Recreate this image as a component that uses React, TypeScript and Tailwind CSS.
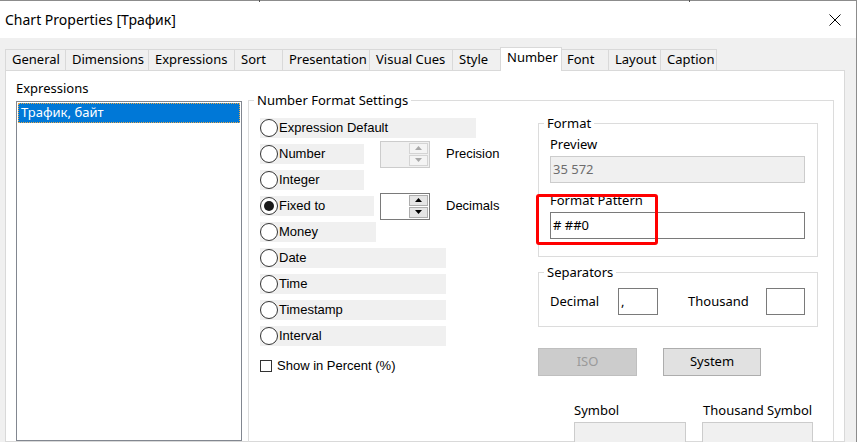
import React from 'react';

const seg = "font-['Noto_Sans',sans-serif]";
const ms = "font-['Liberation_Sans',Arial,sans-serif]";

type Tab = { label: string; w: string; pl?: string; first?: boolean; last?: boolean; active?: boolean; noLeft?: boolean };

const tabs: Tab[] = [
  { label: 'General', w: 'w-[60px]' },
  { label: 'Dimensions', w: 'w-[83px]' },
  { label: 'Expressions', w: 'w-[86px]' },
  { label: 'Sort', w: 'w-[48px]' },
  { label: 'Presentation', w: 'w-[87px]' },
  { label: 'Visual Cues', w: 'w-[83px]' },
  { label: 'Style', w: 'w-[48px]' },
  { label: 'Number', w: 'w-[62px]', active: true },
  { label: 'Font', w: 'w-[46px]', noLeft: true },
  { label: 'Layout', w: 'w-[52px]' },
  { label: 'Caption', w: 'w-[57px]', last: true },
];

type RadioDef = { label: string; w: string; spin?: string; disabled?: boolean; checked?: boolean };

const radios: RadioDef[] = [
  { label: 'Expression Default', w: 'w-[216px]' },
  { label: 'Number', w: 'w-[104px]', spin: 'Precision', disabled: true },
  { label: 'Integer', w: 'w-[104px]' },
  { label: 'Fixed to', w: 'w-[114px]', spin: 'Decimals', checked: true },
  { label: 'Money', w: 'w-[116px]' },
  { label: 'Date', w: 'w-[186px]' },
  { label: 'Time', w: 'w-[186px]' },
  { label: 'Timestamp', w: 'w-[186px]' },
  { label: 'Interval', w: 'w-[186px]' },
];

function Arrow({ up, color }: { up?: boolean; color: string }) {
  return (
    <svg width="7" height="4" viewBox="0 0 7 4">
      <polygon points={up ? '0,4 3.5,0 7,4' : '0,0 3.5,4 7,0'} fill={color} />
    </svg>
  );
}

function Spinner({ disabled }: { disabled?: boolean }) {
  const btn = disabled
    ? 'border-[#d4d4d4] bg-[#f4f4f4]'
    : 'border-[#adadad] bg-[#e5e5e5]';
  const arrow = disabled ? '#a8a8a8' : '#000000';
  return (
    <div
      className={`w-[50px] h-[27px] border flex shrink-0 ${
        disabled ? 'border-[#cccccc] bg-[#f0f0f0]' : 'border-[#7a7a7a] bg-white'
      }`}
    >
      <div className="flex-1" />
      <div className="w-[21px] flex flex-col gap-px p-px">
        <div className={`flex-1 border flex items-center justify-center ${btn}`}>
          <Arrow up color={arrow} />
        </div>
        <div className={`flex-1 border flex items-center justify-center ${btn}`}>
          <Arrow color={arrow} />
        </div>
      </div>
    </div>
  );
}

function Radio({ r }: { r: RadioDef }) {
  return (
    <div className={`flex items-center h-[20px] bg-[#f0f0f0] ${r.w}`}>
      <span className="w-[18px] h-[18px] rounded-full border border-[#333333] bg-white flex items-center justify-center shrink-0">
        {r.checked && <span className="w-[10px] h-[10px] rounded-full bg-[#1a1a1a]" />}
      </span>
      <span className="ml-px">{r.label}</span>
    </div>
  );
}

function Group({ label, className = '', children }: { label: string; className?: string; children: React.ReactNode }) {
  return (
    <fieldset className={`border border-[#dcdcdc] ${className}`}>
      <legend className={`ml-[5px] px-[3px] text-[13px] leading-[16px] ${seg}`}>{label}</legend>
      {children}
    </fieldset>
  );
}

export default function App() {
  return (
    <div className={`relative w-[861px] h-[442px] overflow-hidden bg-white text-black text-[13px] ${seg}`}>
      <span className="absolute left-[259px] top-0 w-px h-[2px] bg-[#555555]" />
      <span className="absolute left-[689px] top-0 w-px h-[2px] bg-[#555555]" />

      <div className="w-[857px] h-[442px] border-t border-r border-[#8c8c8c] flex flex-col">
        {/* title bar */}
        <div className="h-[37px] pt-px pl-[5px] pr-[15px] flex items-center justify-between bg-white">
          <span className="text-[14px] leading-[20px]">Chart Properties [Трафик]</span>
          <svg width="12" height="12" viewBox="0 0 12 12">
            <path d="M0.5 0.5 L11.5 11.5 M11.5 0.5 L0.5 11.5" stroke="#000" strokeWidth="1" />
          </svg>
        </div>

        {/* body */}
        <div className="flex-1 bg-[#f0f0f0] pl-[5px] pr-[11px] flex flex-col min-h-0">
          <div className="h-[32px] flex items-end shrink-0">
            {tabs.map((t) =>
              t.active ? (
                <div
                  key={t.label}
                  className={`${t.w} h-[24px] -mb-px relative z-10 bg-white border-t border-l border-r border-[#d9d9d9] pl-[6px] pb-[3px] flex items-center text-[13px]`}
                >
                  {t.label}
                </div>
              ) : (
                <div
                  key={t.label}
                  className={`${t.w} h-[21px] border-t border-[#d9d9d9] ${t.noLeft ? 'pl-[5px]' : 'border-l pl-[6px]'} ${
                    t.last ? 'border-r' : ''
                  } flex items-center text-[13px]`}
                >
                  {t.label}
                </div>
              )
            )}
          </div>

          {/* tab panel */}
          <div className="flex-1 border border-[#d9d9d9] bg-white flex pl-[10px] pt-[9px] min-h-0">
            <div className="w-[226px] flex flex-col shrink-0">
              <div className="text-[13px] leading-[16px]">Expressions</div>
              <div className="mt-[5px] h-[400px] border border-[#828790] p-px">
                <div className="h-[20px] bg-[#0078d7] border border-dotted border-[#e8a84a] text-white pl-[2px] flex items-center text-[13px]">
                  Трафик, байт
                </div>
              </div>
            </div>

            <Group label="Number Format Settings" className="ml-[6px] mt-[12px] w-[586px] h-[400px] shrink-0">
              <div className="flex pl-[11px]">
                {/* radio column */}
                <div className={`w-[278px] pt-[10px] flex flex-col gap-[6px] ${ms} text-[13px]`}>
                  {radios.map((r) =>
                    r.spin ? (
                      <div key={r.label} className="flex items-center h-[20px]">
                        <div className="w-[120px]">
                          <Radio r={r} />
                        </div>
                        <Spinner disabled={r.disabled} />
                        <span className="ml-[16px]">{r.spin}</span>
                      </div>
                    ) : (
                      <Radio key={r.label} r={r} />
                    )
                  )}
                  <div className="mt-[4px] h-[20px] flex items-center">
                    <span className="w-[12px] h-[12px] border border-[#333333] bg-white" />
                    <span className="ml-[5px]">Show in Percent (%)</span>
                  </div>
                </div>

                {/* format column */}
                <div className="w-[280px] mt-[7px] flex flex-col">
                  <Group label="Format">
                    <div className="pl-[11px] pr-[12px] pb-[17px]">
                      <div className="mt-[5px] leading-[16px]">Preview</div>
                      <div className="mt-[4px] h-[27px] border border-[#cccccc] bg-[#f0f0f0] pl-[2px] flex items-center text-[#6d6d6d]">
                        35 572
                      </div>
                      <div className="mt-[9px] leading-[16px]">Format Pattern</div>
                      <div className="mt-[4px] h-[27px] border border-[#7a7a7a] bg-white pl-[2px] flex items-center">
                        # ##0
                      </div>
                    </div>
                  </Group>

                  <Group label="Separators" className="mt-[7px]">
                    <div className="pl-[11px] pt-[8px] pb-[11px] flex items-center">
                      <span className="w-[68px]">Decimal</span>
                      <div className="w-[40px] h-[27px] border border-[#7a7a7a] pl-[2px] flex items-center">,</div>
                      <span className="ml-[30px] w-[78px]">Thousand</span>
                      <div className="w-[39px] h-[27px] border border-[#7a7a7a]" />
                    </div>
                  </Group>

                  <div className="mt-[21px] flex">
                    <div className="w-[99px] h-[28px] border border-[#bfbfbf] bg-[#cccccc] text-[#9a9a9a] flex items-center justify-center">
                      ISO
                    </div>
                    <div className="ml-[26px] w-[98px] h-[28px] border border-[#adadad] bg-[#e1e1e1] flex items-center justify-center">
                      System
                    </div>
                  </div>

                  <div className="mt-[26px] flex">
                    <div className="ml-[36px] w-[112px] flex flex-col">
                      <span className="leading-[16px]">Symbol</span>
                      <div className="mt-[4px] h-[60px] border border-[#cccccc] bg-[#f0f0f0]" />
                    </div>
                    <div className="ml-[16px] w-[111px] flex flex-col">
                      <span className="pl-px leading-[16px]">Thousand Symbol</span>
                      <div className="mt-[4px] h-[60px] border border-[#cccccc] bg-[#f0f0f0]" />
                    </div>
                  </div>
                </div>
              </div>
            </Group>
          </div>
        </div>
      </div>

      {/* red highlight annotation */}
      <div className="absolute left-[536px] top-[194px] w-[122px] h-[51px] border-[3px] border-[#ff0000] rounded-[3px]" />
    </div>
  );
}
